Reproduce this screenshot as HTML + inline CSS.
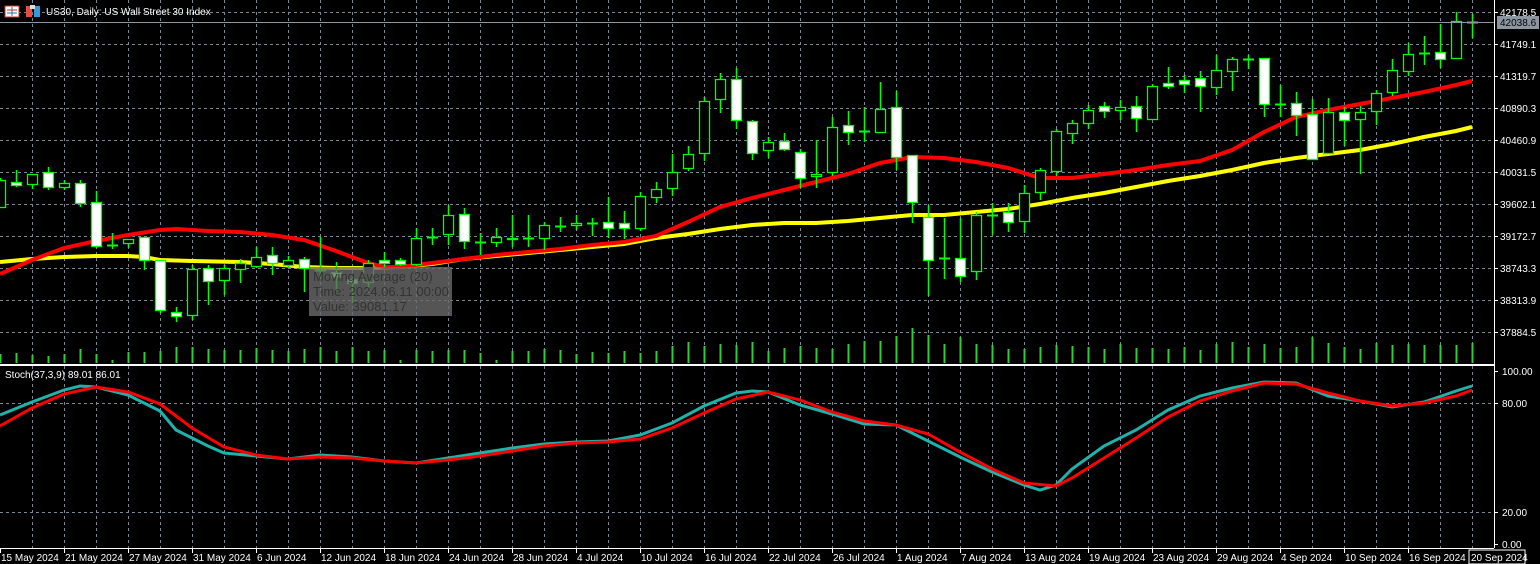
<!DOCTYPE html>
<html><head><meta charset="utf-8"><style>
html,body{margin:0;padding:0;background:#000;width:1540px;height:564px;overflow:hidden}
svg{display:block}
text{font-family:"Liberation Sans",sans-serif;font-size:10px;fill:#fff}
</style></head><body>
<svg id="s" width="1540" height="564" xmlns="http://www.w3.org/2000/svg">
<rect width="1540" height="564" fill="#000"/>
<g id="grid" stroke="#7b8794" stroke-dasharray="3,3" stroke-width="1"></g>
<g id="vol" stroke="#32cd32" stroke-width="2"></g>
<polyline id="ma50" fill="none" stroke="#ffff00" stroke-width="4"/>
<polyline id="ma20" fill="none" stroke="#ff0000" stroke-width="4"/>
<g id="cndl"></g>
<line x1="0" y1="22.5" x2="1494" y2="22.5" stroke="#8c96a0" stroke-width="1"/>
<rect x="309" y="267" width="143" height="49" fill="#6a6a6a" fill-opacity="0.8"/>
<text x="313" y="281" style="font-size:13px;fill:#333">Moving Average (20)</text>
<text x="313" y="296" style="font-size:13px;fill:#333">Time: 2024.06.11 00:00</text>
<text x="313" y="311" style="font-size:13px;fill:#333">Value: 39081.17</text>
<polyline id="st2" fill="none" stroke="#20b2aa" stroke-width="3"/>
<polyline id="st1" fill="none" stroke="#ff0000" stroke-width="3"/>
<line x1="0" y1="365" x2="1494" y2="365" stroke="#fff" stroke-width="2"/>
<line x1="1494.5" y1="0" x2="1494.5" y2="548" stroke="#fff"/>
<line x1="0" y1="548.5" x2="1494" y2="548.5" stroke="#fff"/>
<g id="ticks" stroke="#fff"></g>
<rect x="5" y="6" width="14" height="11" fill="#fff" stroke="#c0392b"/>
<line x1="12" y1="7" x2="12" y2="16" stroke="#2e6db4"/>
<line x1="7" y1="10" x2="17" y2="10" stroke="#c0392b"/><line x1="7" y1="13" x2="17" y2="13" stroke="#2e6db4"/>
<rect x="26" y="6" width="6" height="11" fill="#e74c3c"/><rect x="34" y="6" width="6" height="11" fill="#3498db"/><rect x="30" y="5" width="5" height="4" fill="#ddd"/>
<text x="46" y="15">US30, Daily:  US Wall Street 30 Index</text>
<text x="5" y="378">Stoch(37,3,9) 89.01 86.01</text>
<g id="plab"></g>
<rect x="1497" y="16" width="42" height="13" fill="#8c96a0"/>
<text x="1500" y="26" style="fill:#000">42038.6</text>
<rect x="1469" y="550" width="56" height="14" fill="#000" stroke="#fff"/>
<g id="dlab"></g>
</svg>
<script>
var NS="http://www.w3.org/2000/svg";
function el(p,t,a,txt){var e=document.createElementNS(NS,t);for(var k in a)e.setAttribute(k,a[k]);if(txt)e.textContent=txt;document.getElementById(p).appendChild(e);return e;}
for(var x=32;x<=1472;x+=32){el("grid","line",{x1:x+.5,y1:0,x2:x+.5,y2:548});}
for(var y=12;y<=332;y+=32){el("grid","line",{x1:0,y1:y+.5,x2:1494,y2:y+.5});}
[403,512].forEach(function(y){el("grid","line",{x1:0,y1:y+.5,x2:1494,y2:y+.5});});
var pl=["42178.5","41749.1","41319.7","40890.3","40460.9","40031.5","39602.1","39172.7","38743.3","38313.9","37884.5"];
pl.forEach(function(t,i){var y=12+32*i;if(i>0)el("plab","text",{x:1500,y:y+4},t);el("ticks","line",{x1:1494,y1:y+.5,x2:1498,y2:y+.5});});
el("plab","text",{x:1500,y:16},"42178.5");
[["100.00",371],["80.00",403],["20.00",512],["0.00",544]].forEach(function(a){el("plab","text",{x:1502,y:a[1]+4},a[0]);el("ticks","line",{x1:1494,y1:a[1]+.5,x2:1498,y2:a[1]+.5});});
var dl=["15 May 2024","21 May 2024","27 May 2024","31 May 2024","6 Jun 2024","12 Jun 2024","18 Jun 2024","24 Jun 2024","28 Jun 2024","4 Jul 2024","10 Jul 2024","16 Jul 2024","22 Jul 2024","26 Jul 2024","1 Aug 2024","7 Aug 2024","13 Aug 2024","19 Aug 2024","23 Aug 2024","29 Aug 2024","4 Sep 2024","10 Sep 2024","16 Sep 2024"];
dl.forEach(function(t,i){var x=i*64;el("dlab","text",{x:x+1,y:561},t);el("ticks","line",{x1:x+.5,y1:548,x2:x+.5,y2:553});});
el("dlab","text",{x:1471,y:561},"20 Sep 2024");
var C=[[180,207,178,207,0],[182,185,170,187,1],[174,184,174,189,0],[172,187,167,190,1],[183,187,180,190,0],[183,203,180,207,1],[202,246,191,248,1],[245,245,233,249,0],[239,243,239,248,0],[237,260,237,270,1],[260,310,260,313,1],[312,316,307,322,1],[269,315,265,320,0],[268,281,265,305,1],[268,280,265,295,0],[263,269,259,283,0],[257,266,247,268,0],[255,263,247,275,1],[260,265,256,268,0],[259,268,257,292,1],[270,270,237,278,0],[272,277,262,293,1],[279,283,276,303,1],[263,282,260,293,0],[260,263,252,268,1],[260,264,258,266,1],[238,264,228,266,0],[237,237,228,245,0],[215,234,205,245,0],[214,241,208,249,1],[242,242,233,255,0],[237,242,228,247,0],[238,239,215,247,0],[238,238,215,247,0],[225,238,222,250,0],[226,226,217,232,0],[223,225,215,230,0],[223,223,218,236,0],[222,228,197,238,1],[223,228,211,239,1],[196,228,192,231,0],[189,197,182,203,0],[172,188,154,196,0],[154,168,146,171,0],[101,153,97,161,0],[79,99,73,113,0],[79,120,68,129,1],[121,153,120,160,1],[142,150,137,158,0],[141,149,133,151,1],[152,178,149,188,1],[174,176,140,188,0],[127,172,117,176,0],[125,132,111,145,1],[131,131,107,142,0],[109,132,82,133,0],[107,157,91,170,1],[155,202,155,223,1],[217,260,205,296,1],[258,258,218,279,0],[258,276,218,282,1],[215,271,212,280,0],[215,215,203,235,0],[212,222,203,232,1],[193,221,185,233,0],[170,192,168,200,0],[131,171,129,176,0],[123,133,120,144,0],[110,123,105,129,0],[106,111,102,118,1],[107,110,100,120,0],[106,118,96,132,1],[86,119,84,120,0],[83,86,67,89,1],[80,84,75,93,1],[78,86,71,112,1],[70,87,55,95,0],[59,71,57,91,0],[59,59,55,69,0],[58,104,58,117,1],[104,104,85,117,0],[103,115,92,136,1],[114,159,99,159,1],[112,153,98,153,0],[112,120,107,146,1],[112,119,106,174,0],[93,111,90,125,0],[70,92,59,96,0],[54,71,43,76,0],[53,53,36,65,0],[52,59,24,68,1],[21,58,12,59,0],[22,22,14,38,0]];
var vh=[9,10,8,7,9,14,9,3,11,11,12,16,16,14,13,13,15,13,12,14,16,12,16,12,13,3,13,12,13,13,10,3,12,12,14,13,9,11,10,12,10,12,17,21,17,19,18,21,12,15,17,15,14,19,22,22,27,35,28,19,26,19,18,14,14,16,18,17,16,14,19,15,15,14,16,13,19,21,16,19,15,16,26,20,16,14,20,18,19,18,18,18,20];
C.forEach(function(c,i){var x=i*16;
 el("vol","line",{x1:x+.5,y1:363,x2:x+.5,y2:363-vh[i]});
 el("cndl","line",{x1:x+.5,y1:c[2],x2:x+.5,y2:c[3],stroke:"#00ff00","stroke-width":1.5});
 if(c[1]-c[0]<1){el("cndl","line",{x1:x-5,y1:c[0]+.5,x2:x+6,y2:c[0]+.5,stroke:"#00ff00","stroke-width":2});}
 else el("cndl","rect",{x:x-4.5,y:c[0]+.5,width:10,height:c[1]-c[0],fill:c[4]?"#fff":"#000",stroke:"#00ff00","stroke-width":1.3});
});
function P(id,a){var s="";for(var i=0;i<a.length;i+=2)s+=a[i]+","+a[i+1]+" ";document.getElementById(id).setAttribute("points",s);}
P("ma20",[0,274,32,260,64,248,96,241,128,235,160,230,176,229,208,231,240,232,272,235,304,240,336,251,368,263,384,267,400,267,432,263,464,259,496,255,528,252,560,249,592,245,624,242,656,236,688,222,720,207,752,198,784,190,816,182,848,174,880,163,912,157,944,158,976,162,1008,168,1040,178,1072,178,1104,174,1136,170,1168,165,1200,161,1232,150,1264,132,1296,117,1328,110,1360,104,1392,98,1424,92,1456,85,1472,81]);
P("ma50",[0,262,32,259,64,257,96,256,128,256,144,257,160,260,192,261,240,262,272,264,304,267,336,268,368,268,400,267,432,264,464,259,496,256,528,253,560,250,592,247,624,244,656,238,688,234,720,229,752,225,784,223,816,223,848,221,880,218,912,215,944,215,976,212,1008,209,1040,204,1072,198,1104,193,1136,187,1168,181,1200,176,1232,170,1264,163,1296,158,1328,154,1360,150,1392,144,1424,137,1456,131,1472,127]);
P("st2",[0,415,32,402,64,390,80,386,96,387,128,395,160,411,176,430,208,446,224,453,256,456,288,459,320,455,352,457,384,461,416,463,448,458,480,453,512,448,544,444,576,442,608,441,640,435,672,423,704,406,736,393,752,391,768,392,800,405,832,414,864,424,896,425,928,441,960,457,992,472,1024,485,1040,490,1056,485,1072,469,1104,446,1136,430,1168,410,1200,396,1232,388,1264,382,1296,383,1328,396,1360,401,1392,407,1424,402,1456,391,1472,386]);
P("st1",[0,426,32,408,64,394,96,387,128,392,160,404,192,428,224,447,256,455,288,459,320,457,352,458,384,461,416,463,448,460,480,456,512,451,544,446,576,443,608,442,640,439,672,428,704,413,736,399,768,392,800,400,832,412,864,421,896,425,928,434,960,452,992,469,1024,483,1056,486,1072,478,1104,458,1136,438,1168,417,1200,401,1232,391,1264,383,1296,384,1328,393,1360,401,1392,406,1424,403,1456,396,1472,390]);
</script>
</body></html>
